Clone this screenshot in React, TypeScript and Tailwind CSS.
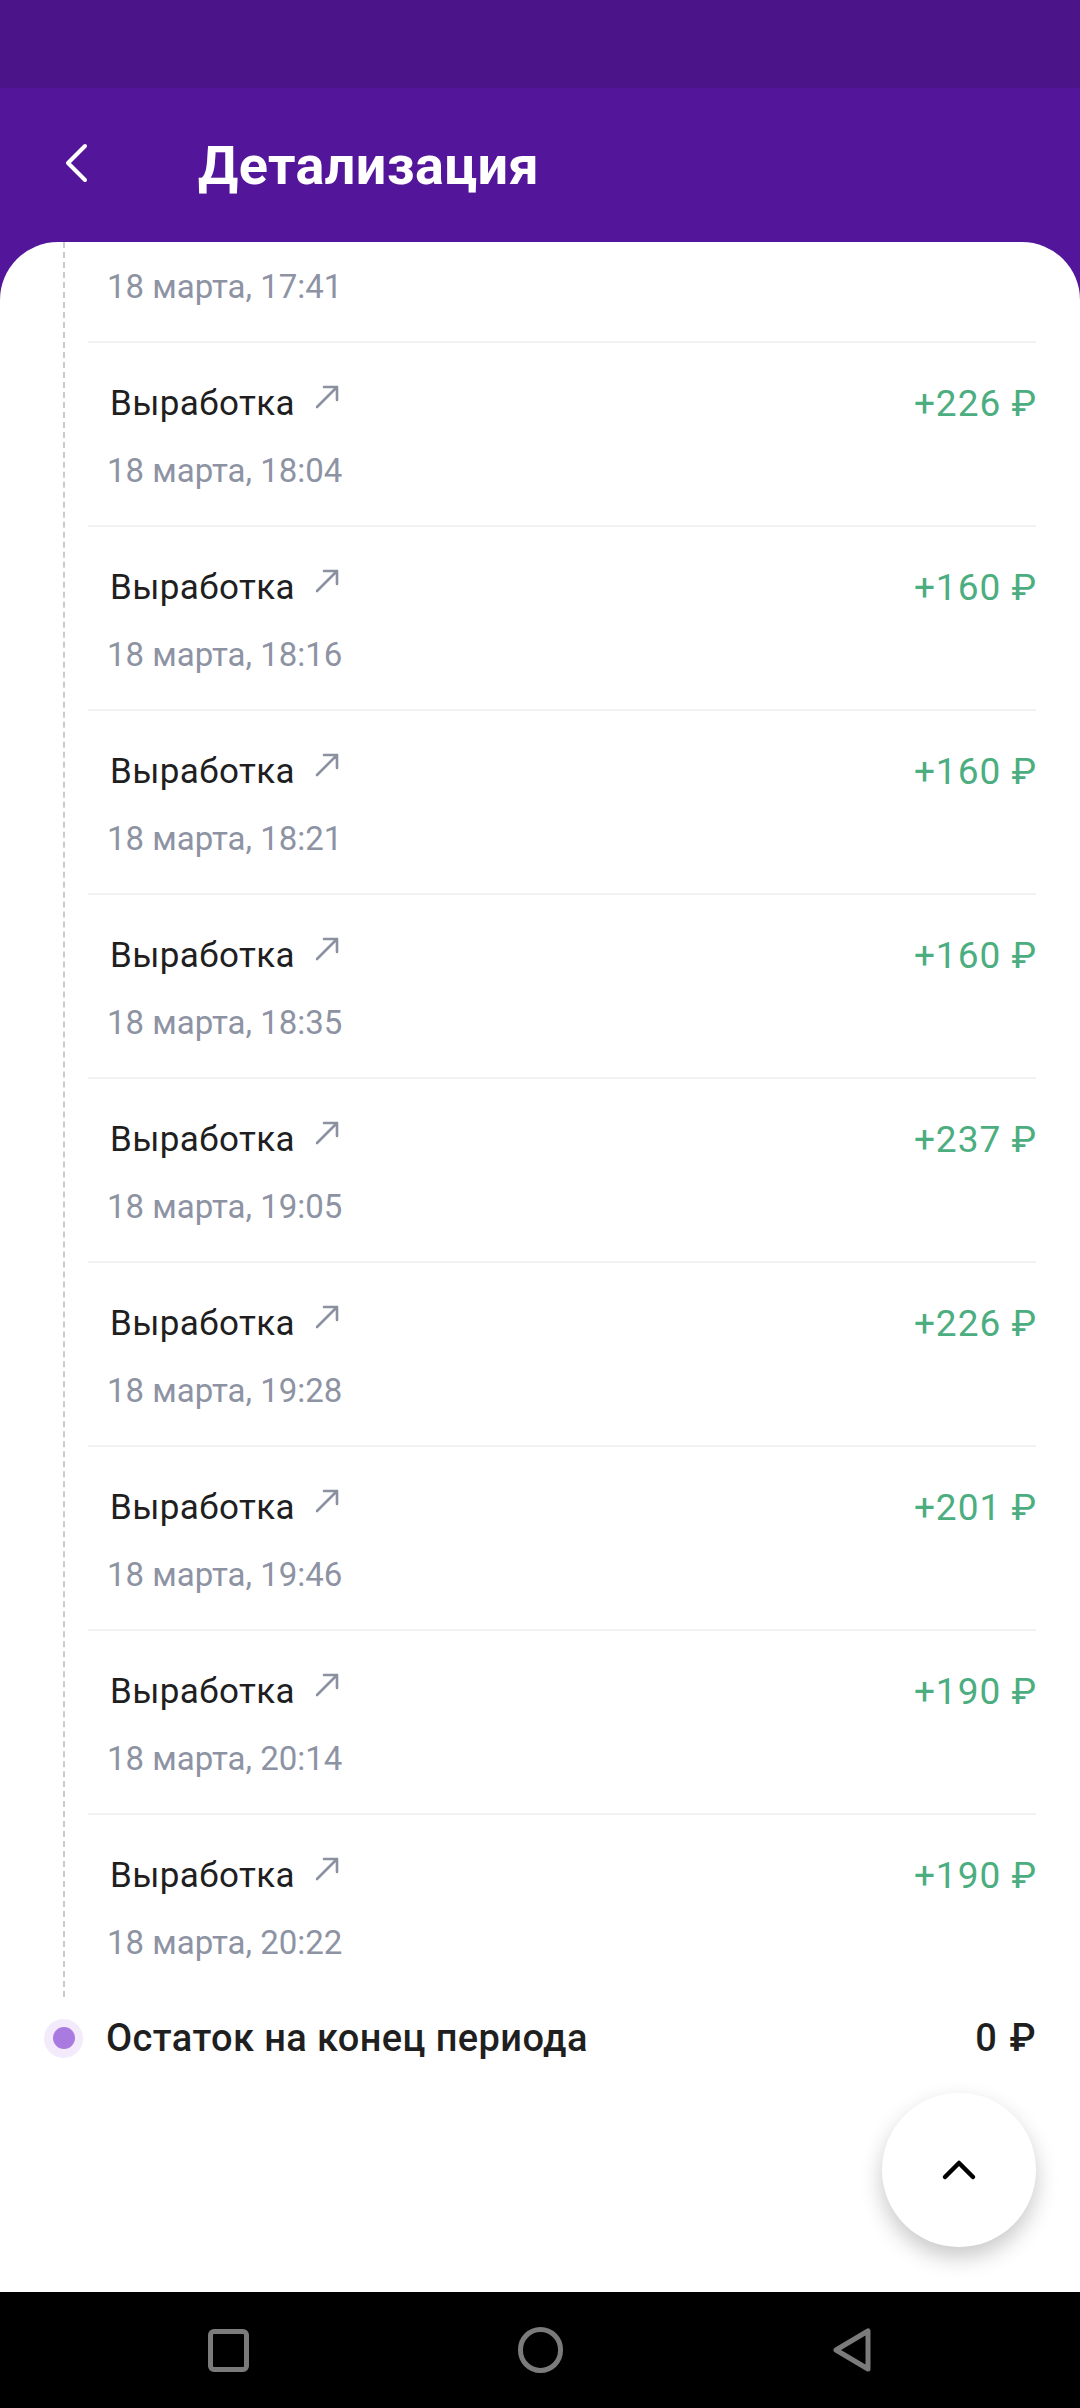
import React from "react";

const rows = [
  { time: "18:04", amount: "+226" },
  { time: "18:16", amount: "+160" },
  { time: "18:21", amount: "+160" },
  { time: "18:35", amount: "+160" },
  { time: "19:05", amount: "+237" },
  { time: "19:28", amount: "+226" },
  { time: "19:46", amount: "+201" },
  { time: "20:14", amount: "+190" },
  { time: "20:22", amount: "+190" },
];

function ArrowUpRight() {
  return (
    <svg width="26" height="26" viewBox="0 0 26 26" fill="none" className="ml-[19px] mt-[-14px]">
      <path d="M3 23 L23 3 M10 3 H23 V16" stroke="#8b91a1" strokeWidth="2.6" strokeLinecap="round" strokeLinejoin="round" />
    </svg>
  );
}

export default function App() {
  return (
    <div className="w-[1080px] h-[2408px] flex flex-col overflow-hidden bg-[#53159a]" style={{ fontFamily: "Roboto, 'Noto Sans', sans-serif" }}>
      {/* status bar */}
      <div className="h-[88px] bg-[#4b1589] shrink-0" />
      {/* header */}
      <div className="h-[154px] shrink-0 flex items-center bg-[#53159a]">
        <div className="w-[198px] flex items-center pl-[64px] pb-[4px]">
          <svg width="26" height="40" viewBox="0 0 26 40" fill="none">
            <path d="M21 3 L4 20 L21 37" stroke="white" strokeWidth="4" strokeLinecap="round" strokeLinejoin="round" />
          </svg>
        </div>
        <div className="text-white font-bold text-[54px] leading-none pt-[2px] tracking-[0.4px]">Детализация</div>
      </div>
      {/* card */}
      <div className="flex-1 relative bg-white rounded-t-[58px] flex flex-col">
        <div className="flex">
          <div className="w-[88px] shrink-0 flex">
            <div className="ml-[63px] h-[1755px] border-l-2 border-dashed border-[#c9cbd0]" />
          </div>
          <div className="flex-1 mr-[44px] flex flex-col">
            <div className="pt-[25px] pb-[34px] pl-[19px] text-[33px] leading-[40px] text-[#8d93a3]">18 марта, 17:41</div>
            {rows.map((r, i) => (
              <div key={i} className="flex flex-col">
                <div className="h-[2px] bg-[#f1f2f4]" />
                <div className="pt-[39px] pb-[34px] pl-[19px] flex flex-col">
                  <div className="flex items-center justify-between h-[44px]">
                    <div className="flex items-center pl-[3px]">
                      <span className="text-[35px] leading-[44px] tracking-[0.4px] text-[#1f1f1f]">Выработка</span>
                      <ArrowUpRight />
                    </div>
                    <span className="text-[37px] leading-[44px] tracking-[1px] mr-[-1px] text-[#4cae80]">{r.amount} ₽</span>
                  </div>
                  <div className="mt-[25px] text-[33px] leading-[40px] text-[#8d93a3]">18 марта, {r.time}</div>
                </div>
              </div>
            ))}
          </div>
        </div>
        {/* end row */}
        <div className="flex items-center mt-[19px] pr-[44px]">
          <div className="ml-[44px] w-[39px] h-[39px] rounded-full bg-[#f3ebfb] flex items-center justify-center shrink-0">
            <div className="w-[22px] h-[22px] rounded-full bg-[#a97ae0]" />
          </div>
          <div className="ml-[23px] flex-1 text-[38px] leading-[44px] font-medium tracking-[0.4px] text-[#1f1f1f]">Остаток на конец периода</div>
          <div className="text-[38px] leading-[44px] font-medium tracking-[1.5px] mr-[-1px] text-[#1f1f1f]">0 ₽</div>
        </div>
        {/* FAB */}
        <div className="absolute right-[44px] bottom-[45px] w-[154px] h-[154px] rounded-full bg-white shadow-[0_10px_22px_rgba(0,0,0,0.22)] flex items-center justify-center">
          <svg width="36" height="22" viewBox="0 0 36 22" fill="none">
            <path d="M4 18 L18 4 L32 18" stroke="#000" strokeWidth="4.5" strokeLinecap="round" strokeLinejoin="round" />
          </svg>
        </div>
      </div>
      {/* nav bar */}
      <div className="h-[116px] shrink-0 bg-black flex items-center justify-center">
        <div className="w-[312px] flex justify-center">
          <div className="w-[41px] h-[43px] rounded-[6px] border-[5px] border-[#7b7b7b]" />
        </div>
        <div className="w-[312px] flex justify-center">
          <div className="w-[45px] h-[46px] rounded-full border-[5px] border-[#7b7b7b]" />
        </div>
        <div className="w-[312px] flex justify-center">
          <svg width="42" height="46" viewBox="0 0 42 46" fill="none">
            <path d="M37 4 L37 42 L5 23 Z" stroke="#7b7b7b" strokeWidth="5" strokeLinejoin="round" />
          </svg>
        </div>
      </div>
    </div>
  );
}
